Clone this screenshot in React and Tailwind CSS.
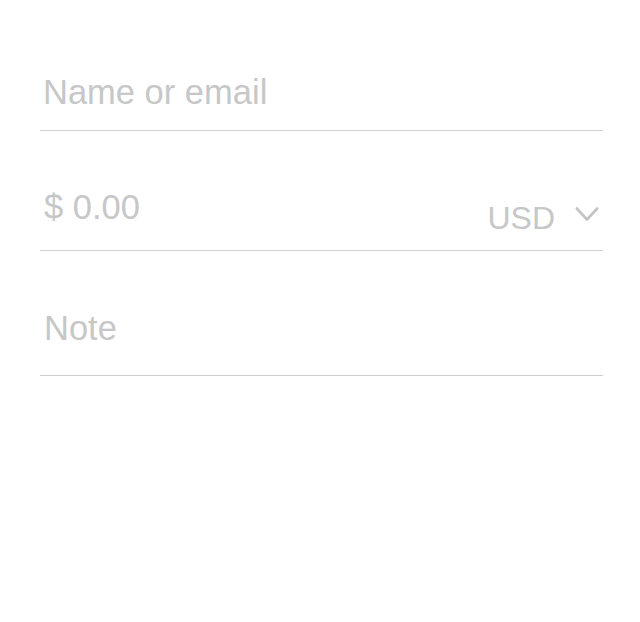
import React from 'react';

function Chevron() {
  return (
    <svg width="24" height="17" viewBox="0 0 24 17" fill="none" className="mt-[8px] text-[#c4c4c4]">
      <polyline points="1.8,2.5 12,13.5 22.2,2.5" stroke="currentColor" strokeWidth="2.6" strokeLinecap="round" strokeLinejoin="round" />
    </svg>
  );
}

export default function App() {
  return (
    <div className="min-h-[622px] w-[640px] bg-white font-['Liberation_Sans',Arial,sans-serif] text-[34.5px] leading-[40px] text-[#c7c7c7]">
      <div className="flex flex-col pl-[40px] pr-[37px]">
        {/* Recipient */}
        <div className="h-[131px] border-b border-[#cfcfcf] pl-[3px] pt-[72px]">
          <span>Name or email</span>
        </div>

        {/* Amount */}
        <div className="flex h-[120px] items-start justify-between border-b border-[#cfcfcf] pl-[4px] pr-[4px]">
          <span className="mt-[56px]">$ 0.00</span>
          <div className="mt-[67px] flex items-start gap-[20px]">
            <span className="text-[32px]">USD</span>
            <Chevron />
          </div>
        </div>

        {/* Note */}
        <div className="h-[125px] border-b border-[#cfcfcf] pl-[4px] pt-[57px]">
          <span>Note</span>
        </div>
      </div>
    </div>
  );
}
